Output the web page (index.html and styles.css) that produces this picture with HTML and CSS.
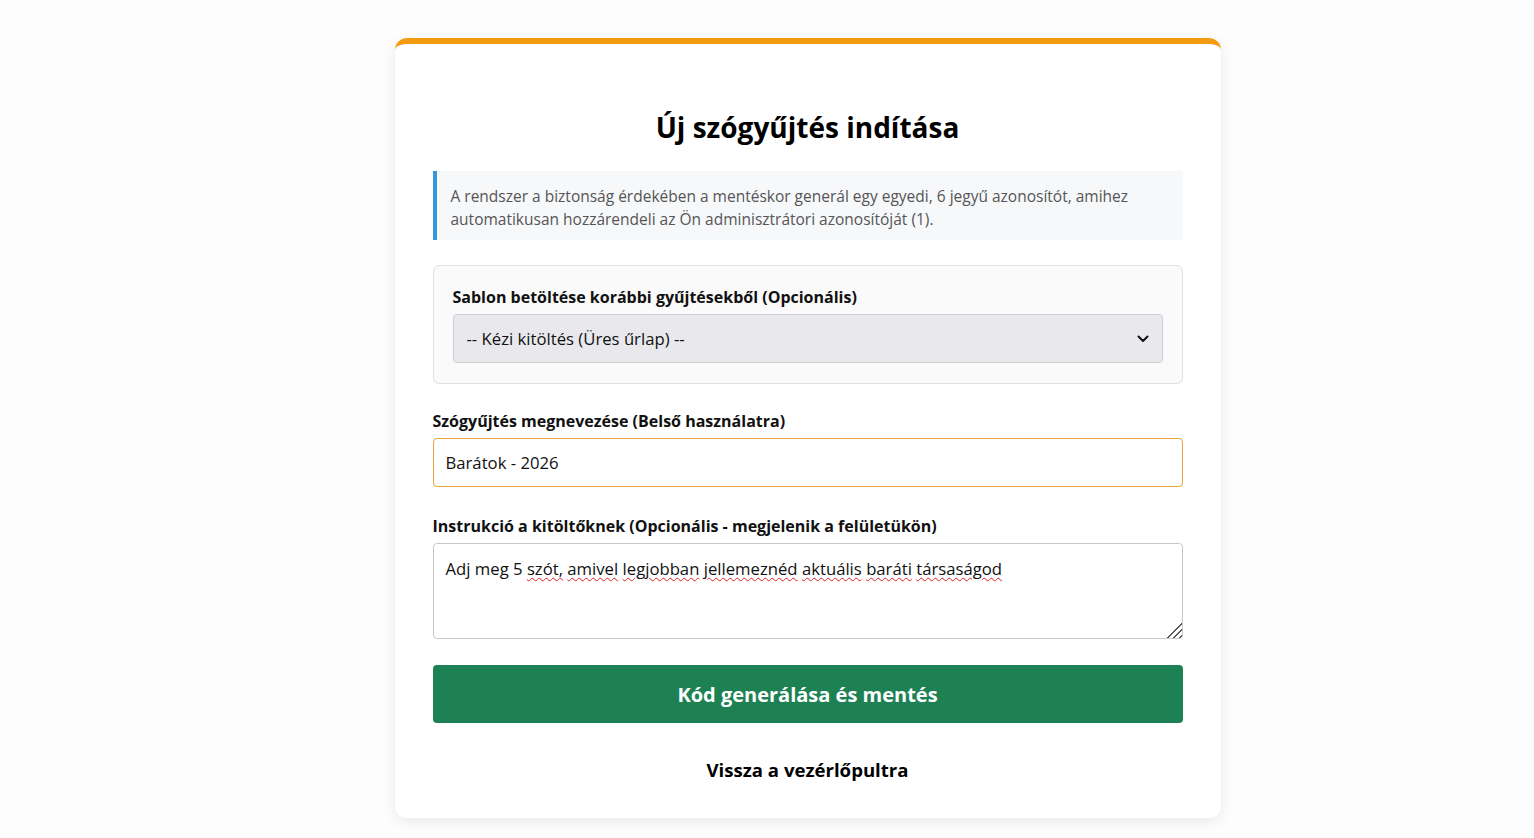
FILE: index.html
```html
<!DOCTYPE html>
<html lang="hu">
<head>
    <meta charset="UTF-8">
    <meta name="viewport" content="width=device-width, initial-scale=1.0">
    <title>Új szógyűjtés indítása</title>
    <link rel="stylesheet" href="styles.css">
</head>
<body>
    <div class="card">
        <h2>Új szógyűjtés indítása</h2>

        <div class="info-box">
            A rendszer a biztonság érdekében a mentéskor generál egy egyedi, 6 jegyű azonosítót, amihez
            automatikusan hozzárendeli az Ön adminisztrátori azonosítóját (1).
        </div>

        <form class="collect-form">
            <div class="template-box">
                <label for="template">Sablon betöltése korábbi gyűjtésekből (Opcionális)</label>
                <div class="select-wrap">
                    <select id="template" class="field select">
                        <option>-- Kézi kitöltés (Üres űrlap) --</option>
                    </select>
                    <svg class="select-arrow" width="12" height="8" viewBox="0 0 12 8">
                        <path d="M1.5 1.5 L6 6 L10.5 1.5" fill="none" stroke="#111" stroke-width="2" stroke-linecap="round" stroke-linejoin="round"/>
                    </svg>
                </div>
            </div>

            <div class="form-group">
                <label for="name">Szógyűjtés megnevezése (Belső használatra)</label>
                <input id="name" class="field field-active" type="text" value="Barátok - 2026" autofocus>
            </div>

            <div class="form-group">
                <label for="instructions">Instrukció a kitöltőknek (Opcionális - megjelenik a felületükön)</label>
                <div id="instructions" class="field textarea" contenteditable="true">Adj meg 5 <span class="typo">szót,</span> <span class="typo">amivel</span> <span class="typo">legjobban</span> <span class="typo">jellemeznéd</span> <span class="typo">aktuális</span> <span class="typo">baráti</span> <span class="typo">társaságod</span></div>
            </div>

            <button type="button" class="submit-btn">Kód generálása és mentés</button>
        </form>

        <a href="#" class="back-link">Vissza a vezérlőpultra</a>
    </div>

    <script>
        // a név mező kapja a fókuszt, a kurzor a szöveg végére kerül
        document.addEventListener('DOMContentLoaded', () => {
            const nameInput = document.getElementById('name');
            nameInput.focus();
            nameInput.setSelectionRange(nameInput.value.length, nameInput.value.length);
        });
    </script>
</body>
</html>
```

FILE: styles.css
```css
body {
    font-family: 'Open Sans', 'Noto Sans', sans-serif;
    margin: 0;
    padding: 38px 0 20px 81px;
    background: #fdfdfd;
    color: #111;
}

.card {
    box-sizing: border-box;
    width: 826px;
    margin: 0 auto;
    padding: 38px 38px 36px;
    background: white;
    border-top: 6px solid #f39c12;
    border-radius: 12px;
    box-shadow: 0 4px 14px rgba(0,0,0,0.08);
}

h2 {
    text-align: center;
    font-size: 28px;
    line-height: 34px;
    margin: 28px 0 27px;
    color: #000;
}

.info-box {
    background: #f7f8fa;
    border-left: 4px solid #3498db;
    padding: 14px 14px 10px;
    font-size: 15.5px;
    line-height: 22.5px;
    color: #555;
    margin-bottom: 25px;
}

.template-box {
    background: #fafafa;
    border: 1px solid #e2e2e2;
    border-radius: 6px;
    padding: 19px 19px 20px;
    margin-bottom: 25px;
}

label {
    display: block;
    font-weight: 700;
    font-size: 16px;
    line-height: 24px;
    margin-bottom: 5px;
}

.form-group {
    margin-bottom: 26px;
}

.form-group + .form-group {
    margin-top: 27px;
}

.field {
    display: block;
    box-sizing: border-box;
    width: 100%;
    height: 49px;
    padding: 0 12px;
    font-family: inherit;
    font-size: 16.7px;
    color: #111;
    background: white;
    border: 1px solid #c8c8c8;
    border-radius: 4px;
    outline: none;
}

.field-active,
.field:focus {
    border-color: #eaa23a;
}

.select-wrap {
    position: relative;
}

.select {
    appearance: none;
    background: #e9e9ed;
    border-color: #cfcfd4;
    padding-left: 13px;
}

.select-arrow {
    position: absolute;
    right: 14px;
    top: 21px;
    pointer-events: none;
}

.textarea {
    height: 96px;
    padding: 13px 12px;
    line-height: 24px;
    overflow: auto;
    resize: vertical;
}

/* csíkos átméretező fogantyú a jobb alsó sarokban */
.textarea::-webkit-resizer {
    background:
        linear-gradient(135deg, #fff 50%, transparent 50%),
        repeating-linear-gradient(135deg, #fff 0 2.5px, #555 2.5px 4px);
}

.typo {
    text-decoration: underline wavy #e02020;
    text-decoration-thickness: 1px;
    text-underline-offset: 2px;
}

.submit-btn {
    display: block;
    width: 100%;
    height: 58px;
    margin-top: 25px;
    background: #1e8154;
    color: white;
    border: none;
    border-radius: 4px;
    font-family: inherit;
    font-size: 20px;
    font-weight: 700;
    cursor: pointer;
}

.submit-btn:hover {
    background: #196d47;
}

.back-link {
    display: block;
    margin-top: 35px;
    text-align: center;
    font-size: 18.6px;
    line-height: 24px;
    font-weight: 700;
    color: #000;
    text-decoration: none;
}
```
